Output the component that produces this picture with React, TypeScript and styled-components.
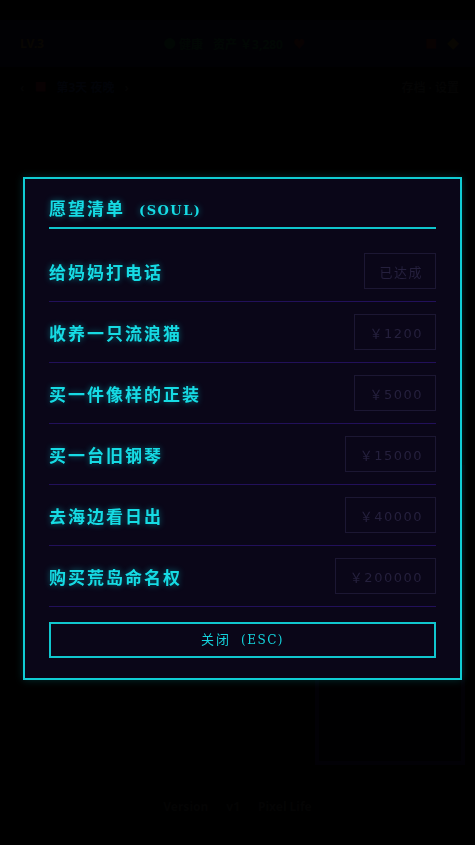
import React from "react";
import styled, { createGlobalStyle } from "styled-components";

const GlobalStyle = createGlobalStyle`
  html, body { margin: 0; padding: 0; background: #000; }
  body { font-family: "DejaVu Serif", "Noto Sans CJK SC", serif; }
  *, *::before, *::after { box-sizing: border-box; }
`;

/* ---------- underlying (dimmed) page ---------- */
const Page = styled.div`
  width: 475px;
  height: 845px;
  background: #000;
  overflow: hidden;
  padding-top: 20px;
  display: flex;
  flex-direction: column;
  font-family: "Noto Sans", "Noto Sans CJK SC", sans-serif;
`;

const TopBar = styled.header`
  height: 47px;
  background: #1a1548;
  display: flex;
  align-items: center;
  justify-content: space-between;
  padding: 0 16px 0 20px;
  font-size: 12px;
`;

const BarGroup = styled.div`
  display: flex;
  align-items: center;
  gap: 10px;
`;

const BarText = styled.span<{ $c: string }>`
  color: ${(p) => p.$c};
  font-weight: 700;
`;

const InfoRow = styled.div`
  height: 40px;
  display: flex;
  align-items: center;
  justify-content: space-between;
  padding: 0 16px 0 20px;
  font-size: 12px;
`;

const Main = styled.main`
  flex: 1;
  display: grid;
  grid-template-columns: 1fr 150px;
  gap: 12px;
  padding: 16px 10px 0 20px;
  align-items: end;
`;

const SidePanel = styled.div`
  height: 300px;
  border: 4px solid #221c66;
  background: #06041a;
`;

const Footer = styled.footer`
  height: 80px;
  display: flex;
  justify-content: center;
  align-items: flex-start;
  padding-top: 33px;
  gap: 18px;
  color: #444;
  font-size: 12px;
  font-weight: 700;
`;

/* ---------- modal ---------- */
const Overlay = styled.div`
  position: fixed;
  inset: 0;
  background: rgba(0, 0, 0, 0.94);
  display: flex;
  align-items: flex-start;
  padding: 177px 14px 0 23px;
`;

const Modal = styled.section`
  width: 439px;
  flex: none;
  background: #0a0618;
  border: 2px solid #10cdd4;
  box-shadow: 0 0 8px rgba(0, 220, 230, 0.2);
  padding: 20px 24px;
`;

const Header = styled.div`
  height: 30px;
  display: flex;
  align-items: flex-start;
  border-bottom: 2px solid #0fc4cc;
  margin-bottom: 12px;
`;

const Title = styled.h2`
  margin: 0;
  display: flex;
  align-items: baseline;
  font-family: "DejaVu Serif", "Noto Sans CJK SC", serif;
  font-size: 17px;
  line-height: 20px;
  font-weight: 700;
  letter-spacing: 2px;
  color: #16dbe4;
  text-shadow: 0 0 6px rgba(0, 230, 240, 0.45);
`;

const TitleTag = styled.span`
  margin-left: 14px;
  font-size: 13px;
  letter-spacing: 1.5px;
`;

const List = styled.ul`
  list-style: none;
  margin: 0;
  padding: 0;
`;

const Row = styled.li`
  height: 61px;
  display: flex;
  align-items: center;
  justify-content: space-between;
  border-bottom: 1px solid #22105a;
`;

const ItemName = styled.span`
  font-family: "Noto Sans CJK SC", sans-serif;
  font-size: 17px;
  font-weight: 700;
  letter-spacing: 2px;
  color: #16dbe4;
  text-shadow: 0 0 6px rgba(0, 230, 240, 0.45);
`;

const Badge = styled.span`
  height: 36px;
  padding: 0 12px 0 14px;
  display: flex;
  align-items: center;
  border: 1px solid #1c1733;
  color: #25203d;
  font-family: "DejaVu Sans", "Noto Sans CJK SC", sans-serif;
  font-size: 13px;
  letter-spacing: 1.5px;
`;

const CloseButton = styled.button`
  display: block;
  width: 100%;
  height: 36px;
  margin-top: 15px;
  padding: 0;
  background: transparent;
  border: 2px solid #10c6ce;
  color: #14d3dc;
  font-family: "DejaVu Serif", "Noto Sans CJK SC", serif;
  font-size: 13px;
  line-height: 30px;
  letter-spacing: 2px;
  cursor: pointer;
`;

const CloseTag = styled.span`
  margin-left: 10px;
  font-size: 12px;
  letter-spacing: 1.5px;
`;

const wishes = [
  { name: "给妈妈打电话", value: "已达成" },
  { name: "收养一只流浪猫", value: "￥1200" },
  { name: "买一件像样的正装", value: "￥5000" },
  { name: "买一台旧钢琴", value: "￥15000" },
  { name: "去海边看日出", value: "￥40000" },
  { name: "购买荒岛命名权", value: "￥200000" },
];

export default function App() {
  return (
    <>
      <GlobalStyle />
      <Page>
        <TopBar>
          <BarText $c="#8a6420">LV.3</BarText>
          <BarGroup>
            <BarText $c="#1e7a46">● 健康</BarText>
            <BarText $c="#1e7a46">资产 ￥3,280</BarText>
            <BarText $c="#80202c">♥</BarText>
          </BarGroup>
          <BarGroup>
            <BarText $c="#80202c">■</BarText>
            <BarText $c="#8a6420">◆</BarText>
          </BarGroup>
        </TopBar>
        <InfoRow>
          <BarGroup>
            <BarText $c="#444">‹</BarText>
            <BarText $c="#801828">■</BarText>
            <BarText $c="#203a80">第3天 夜晚</BarText>
            <BarText $c="#444">›</BarText>
          </BarGroup>
          <BarText $c="#444">存档 · 设置</BarText>
        </InfoRow>
        <Main>
          <div />
          <SidePanel />
        </Main>
        <Footer>
          <span>Version</span>
          <span>v1</span>
          <span>Pixel Life</span>
        </Footer>
      </Page>
      <Overlay>
        <Modal role="dialog" aria-label="愿望清单">
          <Header>
            <Title>
              愿望清单<TitleTag>(SOUL)</TitleTag>
            </Title>
          </Header>
          <List>
            {wishes.map((w) => (
              <Row key={w.name}>
                <ItemName>{w.name}</ItemName>
                <Badge>{w.value}</Badge>
              </Row>
            ))}
          </List>
          <CloseButton>
            关闭<CloseTag>(ESC)</CloseTag>
          </CloseButton>
        </Modal>
      </Overlay>
    </>
  );
}
